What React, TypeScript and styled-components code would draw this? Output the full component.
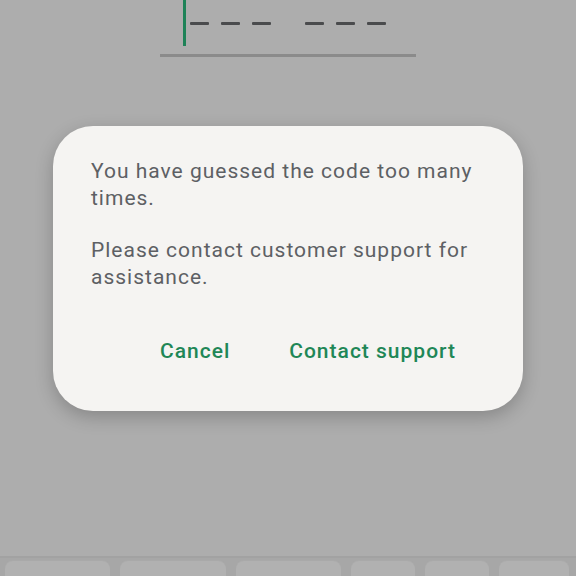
import React from 'react';
import styled, { createGlobalStyle } from 'styled-components';

const GlobalStyle = createGlobalStyle`
  html, body {
    margin: 0;
    padding: 0;
    background: #adadad;
  }
  body {
    font-family: Roboto, "Noto Sans", sans-serif;
  }
`;

const keys = [105, 106, 105, 64, 64, 70];

export default function App() {
  return (
    <Screen>
      <GlobalStyle />
      <CodeField>
        <Cursor />
        <DashGroup>
          <Dash />
          <Dash />
          <Dash />
        </DashGroup>
        <DashGroup>
          <Dash />
          <Dash />
          <Dash />
        </DashGroup>
      </CodeField>
      <Underline />

      <Dialog>
        <Message>You have guessed the code too many times.</Message>
        <Message>Please contact customer support for assistance.</Message>
        <Actions>
          <ActionButton>Cancel</ActionButton>
          <ActionButton>Contact support</ActionButton>
        </Actions>
      </Dialog>

      <Keyboard>
        {keys.map((w, i) => (
          <Key key={i} style={{ width: w }} />
        ))}
      </Keyboard>
    </Screen>
  );
}

const Screen = styled.div`
  height: 576px;
  display: flex;
  flex-direction: column;
  overflow: hidden;
`;

const CodeField = styled.div`
  display: flex;
  align-items: center;
  height: 46px;
  margin-left: 183px;
  gap: 4px;
`;

const Cursor = styled.div`
  width: 3px;
  height: 46px;
  background: #1e8257;
`;

const DashGroup = styled.div`
  display: flex;
  gap: 12px;
  margin-right: 30px;
`;

const Dash = styled.div`
  width: 19px;
  height: 3px;
  background: #4a4b4d;
  border-radius: 1px;
`;

const Underline = styled.div`
  margin: 8px 0 0 160px;
  width: 256px;
  height: 3px;
  background: #8b8b8b;
`;

const Dialog = styled.div`
  margin: 69px 0 0 53px;
  width: 470px;
  height: 285px;
  box-sizing: border-box;
  padding: 32px 30px 0 38px;
  background: #f5f4f2;
  border-radius: 40px;
  box-shadow: 0 6px 18px rgba(0, 0, 0, 0.22);
  display: flex;
  flex-direction: column;
`;

const Message = styled.p`
  margin: 0 0 25px;
  font-size: 21px;
  line-height: 27px;
  color: #5d6064;
  letter-spacing: 1px;
`;

const Actions = styled.div`
  display: flex;
  justify-content: flex-end;
  gap: 59px;
  margin-top: 22px;
  padding-right: 37px;
`;

const ActionButton = styled.button`
  background: none;
  border: none;
  padding: 0;
  font-family: Roboto, "Noto Sans", sans-serif;
  font-weight: 500;
  font-size: 21px;
  line-height: 27px;
  color: #1f8757;
  letter-spacing: 1px;
  cursor: pointer;
`;

const Keyboard = styled.div`
  margin-top: auto;
  height: 20px;
  box-sizing: border-box;
  border-top: 2px solid #a2a2a2;
  background: #a7a7a7;
  display: flex;
  gap: 10px;
  padding: 3px 0 0 5px;
`;

const Key = styled.div`
  height: 30px;
  background: #b1b1b1;
  border-radius: 8px;
  box-shadow: 0 -1px 0 #a9a9a9;
`;
